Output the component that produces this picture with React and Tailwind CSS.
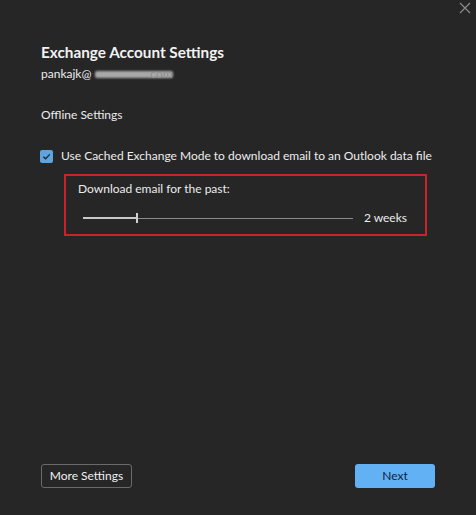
import React from 'react';

export default function App() {
  return (
    <div
      className="relative w-[476px] h-[515px] bg-[#262626] text-white flex flex-col pl-[41px] pr-[41px] pt-[42px] pb-[27px]"
      style={{ fontFamily: 'Lato, "Noto Sans", sans-serif' }}
    >
      {/* window close */}
      <button className="absolute right-[5px] top-[2px] w-[12px] h-[12px] text-[#8a8a8a]">
        <svg viewBox="0 0 12 12" className="w-[12px] h-[12px]" stroke="currentColor" strokeWidth="1.2">
          <path d="M1 1 L11 11 M11 1 L1 11" />
        </svg>
      </button>

      <h1 className="text-[15.3px] leading-[20px] font-bold text-[#f2f2f2]">Exchange Account Settings</h1>
      <div className="flex items-center text-[12px] leading-[18px] text-[#ececec] mt-[3px]">
        <span>pankajk@</span>
        <span className="ml-[4px] w-[78px] h-[7px] bg-[#a8a8a8] rounded-[2px] blur-[1px]" />
        <span className="-ml-[26px] text-[#8f8f8f] blur-[0.5px]">.com</span>
      </div>

      <div className="text-[12px] leading-[18px] text-[#ececec] mt-[23px]">Offline Settings</div>

      <label className="flex items-center gap-[8px] mt-[23px] -ml-[1px] text-[12px] leading-[18px] text-[#ececec] whitespace-nowrap">
        <span className="w-[13px] h-[13px] rounded-[2px] bg-[#5ea4e0] flex items-center justify-center">
          <svg viewBox="0 0 10 10" className="w-[9px] h-[9px]" fill="none" stroke="#1e2a38" strokeWidth="1.5">
            <path d="M1.5 5.2 L4 7.5 L8.6 2.6" />
          </svg>
        </span>
        Use Cached Exchange Mode to download email to an Outlook data file
      </label>

      <div className="ml-[23px] mt-[9px] w-[363px] h-[62px] border-2 border-[#c9222a] pl-[12px] pr-[18px] pt-[4px]">
        <div className="text-[12px] leading-[18px] text-[#ececec]">Download email for the past:</div>
        <div className="flex items-center mt-[11px]">
          <div className="relative w-[270px] h-[12px] ml-[5px] flex items-center">
            <div className="w-full h-[1px] bg-[#8a8a8a]" />
            <div className="absolute left-0 w-[54px] h-[2px] bg-[#c8c8c8]" />
            <div className="absolute left-[53px] w-[2px] h-[10px] bg-[#cfcfcf]" />
          </div>
          <span className="ml-auto text-[12px] leading-[18px] text-[#ececec]">2 weeks</span>
        </div>
      </div>

      <div className="mt-auto flex items-center justify-between">
        <button className="h-[24px] w-[91px] border border-[#6a6a6a] rounded-[3px] text-[12px] leading-[18px] text-[#f0f0f0]">
          More Settings
        </button>
        <button className="h-[24px] w-[80px] rounded-[3px] bg-[#62b1f5] text-[12px] leading-[18px] text-[#10243a]">
          Next
        </button>
      </div>
    </div>
  );
}
